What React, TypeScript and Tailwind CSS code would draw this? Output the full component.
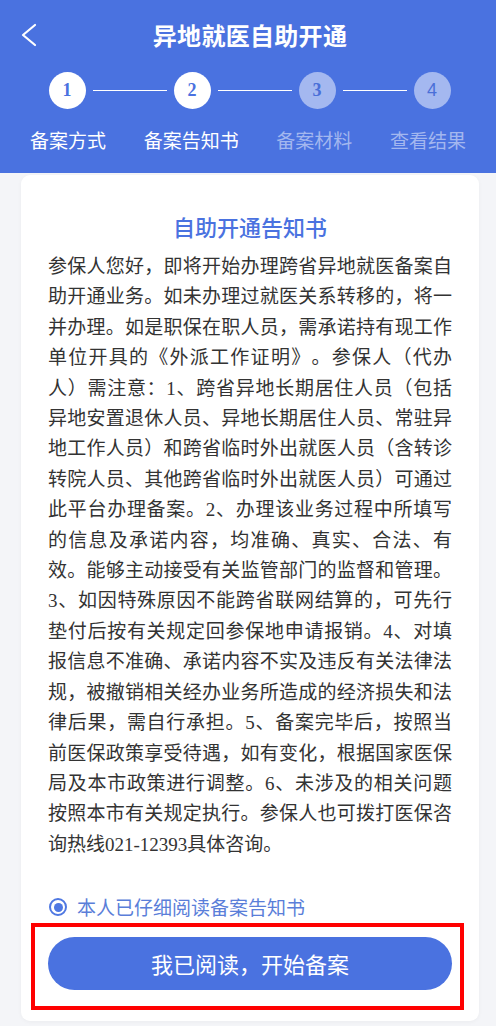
import React from 'react'

const BLUE = '#4a72e0'

const steps = [
  { key: 1, label: '备案方式', done: true },
  { key: 2, label: '备案告知书', done: true },
  { key: 3, label: '备案材料', done: false },
  { key: 4, label: '查看结果', done: false },
]

const body =
  '参保人您好，即将开始办理跨省异地就医备案自助开通业务。如未办理过就医关系转移的，将一并办理。如是职保在职人员，需承诺持有现工作单位开具的《外派工作证明》。参保人（代办人）需注意：1、跨省异地长期居住人员（包括异地安置退休人员、异地长期居住人员、常驻异地工作人员）和跨省临时外出就医人员（含转诊转院人员、其他跨省临时外出就医人员）可通过此平台办理备案。2、办理该业务过程中所填写的信息及承诺内容，均准确、真实、合法、有效。能够主动接受有关监管部门的监督和管理。3、如因特殊原因不能跨省联网结算的，可先行垫付后按有关规定回参保地申请报销。4、对填报信息不准确、承诺内容不实及违反有关法律法规，被撤销相关经办业务所造成的经济损失和法律后果，需自行承担。5、备案完毕后，按照当前医保政策享受待遇，如有变化，根据国家医保局及本市政策进行调整。6、未涉及的相关问题按照本市有关规定执行。参保人也可拨打医保咨询热线021-12393具体咨询。'

// step circle with the number inside
function StepDot({ n, done }: { n: number; done: boolean }) {
  return (
    <div
      className={
        'w-[37px] h-[37px] rounded-full flex items-center justify-center shrink-0 ' +
        (done ? 'bg-white text-[#4a72e0]' : 'bg-[#a4b8f0] text-[#4a6fd8]')
      }
    >
      <span
        className={
          n === 4
            ? "text-[18px] font-['Liberation_Sans',sans-serif]"
            : "text-[18px] font-bold font-['Liberation_Serif',serif]"
        }
      >
        {n}
      </span>
    </div>
  )
}

function Header() {
  return (
    <div className="bg-[#4a72e0] h-[173px] w-full text-white">
      <div className="relative flex items-center justify-center pt-[19px] pl-[4px] h-[51px]">
        <svg
          className="absolute left-[20px] top-[22px]"
          width="18"
          height="26"
          viewBox="0 0 18 26"
          fill="none"
          stroke="white"
          strokeWidth="2.2"
          strokeLinecap="round"
          strokeLinejoin="round"
        >
          <polyline points="15,3 3,13 15,23" />
        </svg>
        <h1 className="text-[24px] leading-[32px] font-bold tracking-[0.3px]">异地就医自助开通</h1>
      </div>

      {/* circles and connecting lines */}
      <div className="flex items-center mt-[20.5px] pl-[48.5px]">
        <StepDot n={1} done />
        <div className="w-[74px] h-px bg-white ml-[7.5px] mr-[6.5px]" />
        <StepDot n={2} done />
        <div className="w-[74px] h-px bg-white ml-[7.5px] mr-[6.5px]" />
        <StepDot n={3} done={false} />
        <div className="w-[64px] h-px bg-white ml-[7.5px] mr-[6.5px]" />
        <StepDot n={4} done={false} />
      </div>

      <div className="flex justify-between px-[30px] mt-[17px]">
        {steps.map((s) => (
          <span
            key={s.key}
            className={'text-[19px] leading-[28px] ' + (s.done ? 'text-white' : 'text-[#a3b7ef]')}
          >
            {s.label}
          </span>
        ))}
      </div>
    </div>
  )
}

export default function App() {
  return (
    <div className="w-[496px] h-[1026px] bg-[#f4f5f8] overflow-hidden font-['Noto_Sans_CJK_SC',sans-serif]">
      <Header />

      <div className="ml-[21px] mr-[17px] mt-[2px] h-[846px] bg-white rounded-[9px] shadow-[0_1px_4px_rgba(0,0,0,0.04)] flex flex-col px-[27px] pt-[36px] pb-[31px]">
        <h2 className="text-center text-[22px] leading-[30px] font-medium text-[#4a72e0]">自助开通告知书</h2>

        <p className="mt-[11px] text-[19px] leading-[30.4px] text-[#333333] text-justify [text-spacing-trim:space-all] font-['Liberation_Serif','Noto_Sans_CJK_SC',serif]">
          {body}
        </p>

        <div className="mt-auto">
          <div className="flex items-center h-[30px]">
            <span className="w-[18px] h-[18px] rounded-full border-2 border-[#4f78e2] flex items-center justify-center ml-px">
              <span className="w-[9px] h-[9px] rounded-full bg-[#4f78e2]" />
            </span>
            <span className="ml-[10px] text-[19px] text-[#5a7ed9]">本人已仔细阅读备案告知书</span>
          </div>

          <div className="relative mt-[15px]">
            <button
              className="w-full h-[53px] rounded-full text-white text-[22px] flex items-center justify-center"
              style={{ backgroundColor: BLUE }}
            >
              我已阅读，开始备案
            </button>
            {/* red highlight annotation over the button */}
            <div className="absolute left-[-17px] right-[-12px] top-[-14px] bottom-[-20px] border-4 border-[#ff0000] pointer-events-none" />
          </div>
        </div>
      </div>
    </div>
  )
}
